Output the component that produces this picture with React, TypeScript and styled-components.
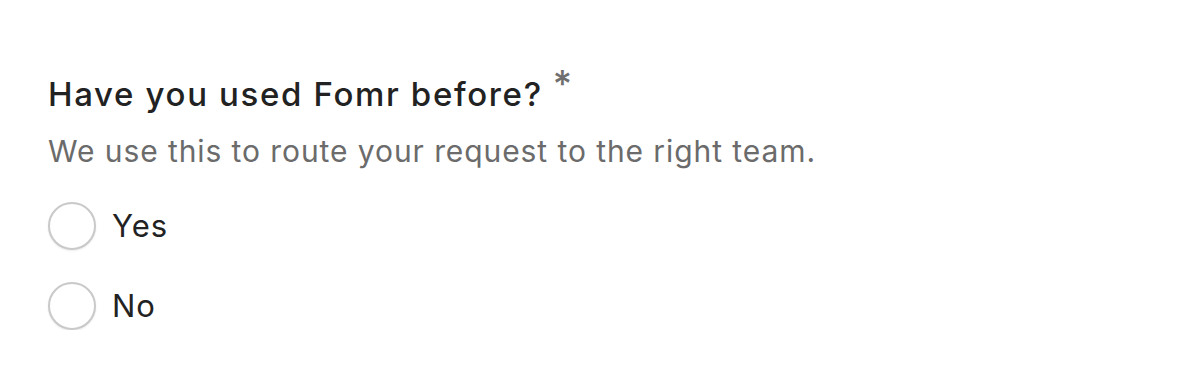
import React from "react";
import styled, { createGlobalStyle } from "styled-components";

const Global = createGlobalStyle`
  html, body { margin: 0; padding: 0; background: #ffffff; }
  body { font-family: Inter, "Noto Sans", sans-serif; -webkit-font-smoothing: antialiased; }
`;

const Page = styled.div`
  padding: 70px 48px 0 48px;
`;

const Field = styled.fieldset`
  border: 0;
  margin: 0;
  padding: 0;
  display: flex;
  flex-direction: column;
`;

const Title = styled.legend`
  padding: 0;
  font-size: 33px;
  line-height: 48px;
  font-weight: 500;
  letter-spacing: 1.65px;
  color: #222222;
  display: flex;
  align-items: flex-start;
  gap: 10px;
`;

const Required = styled.span`
  font-size: 37px;
  line-height: 36px;
  color: #6f6f6f;
  font-weight: 500;
  margin-top: -4px;
`;

const Hint = styled.p`
  margin: 13px 0 31px 0;
  font-size: 30px;
  line-height: 40px;
  letter-spacing: 0.92px;
  color: #6b6b6b;
  font-weight: 400;
`;

const Options = styled.div`
  display: flex;
  flex-direction: column;
  gap: 32px;
`;

const Option = styled.label`
  display: flex;
  align-items: center;
  gap: 16px;
  font-size: 31px;
  line-height: 48px;
  letter-spacing: 1px;
  color: #222222;
  cursor: pointer;
`;

const Radio = styled.span`
  box-sizing: border-box;
  width: 48px;
  height: 48px;
  border-radius: 50%;
  border: 2px solid #c9c9c9;
  background: #ffffff;
  box-shadow: 0 1px 2px rgba(0, 0, 0, 0.08);
  flex: none;
`;

export default function App() {
  return (
    <>
      <Global />
      <Page>
        <Field>
          <Title>
            Have you used Fomr before?<Required>*</Required>
          </Title>
          <Hint>We use this to route your request to the right team.</Hint>
          <Options>
            <Option>
              <Radio />
              Yes
            </Option>
            <Option>
              <Radio />
              No
            </Option>
          </Options>
        </Field>
      </Page>
    </>
  );
}
